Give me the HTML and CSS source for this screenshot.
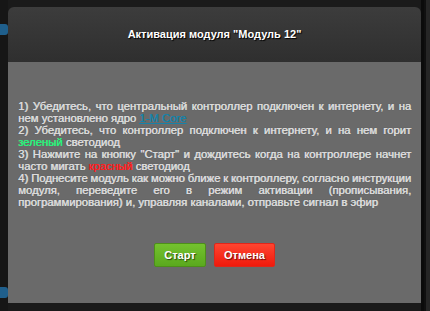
FILE: index.html
```html
<!DOCTYPE html>
<html>
  <head>
    <meta charset="utf-8" />
    <title>Активация модуля</title>
    <link rel="stylesheet" href="styles.css">
  </head>
  <body class="page">
    <div class="page-side">
      <span class="side-tab"></span>
      <span class="side-tab"></span>
    </div>

    <div class="modal">
      <div class="modal-header">
        <p class="modal-title">Активация модуля "Модуль 12"</p>
      </div>

      <div class="modal-body">
        <p class="modal-text">
          <span class="line line-full">1) Убедитесь, что центральный контроллер подключен к интернету, и на</span>
          <span class="line">нем установлено ядро <a class="core-link" href="#">1-M Core</a></span>
          <span class="line line-full">2) Убедитесь, что контроллер подключен к интернету, и на нем горит</span>
          <span class="line"><span class="led-green">зеленый</span> светодиод</span>
          <span class="line line-full">3) Нажмите на кнопку "Старт" и дождитесь когда на контроллере начнет</span>
          <span class="line">часто мигать <span class="led-red">красный</span> светодиод</span>
          <span class="line line-full line-tight">4) Поднесите модуль как можно ближе к контроллеру, согласно инструкции</span>
          <span class="line line-full">модуля, переведите его в режим активации (прописывания,</span>
          <span class="line">программирования) и, управляя каналами, отправьте сигнал в эфир</span>
        </p>

        <div class="modal-buttons">
          <button class="btn btn-start">Старт</button>
          <button class="btn btn-cancel">Отмена</button>
        </div>
      </div>
    </div>

    <div class="page-edge"></div>
  </body>
</html>
```

FILE: styles.css
```css
html {
  height: 100%;
}

.page {
  margin: 0;
  height: 100%;
  display: flex;
  background: #1a1a1a;
  font-family: "Liberation Sans", Arial, sans-serif;
}

.page-side {
  width: 8px;
  display: flex;
  flex-direction: column;
  padding-top: 24px;
  gap: 252px;
  background: #161616;
}

.side-tab {
  display: block;
  height: 11px;
  background: #1f5f8c;
  border-radius: 0 3px 3px 0;
}

.modal {
  width: 413px;
  margin: 7px 0 8px;
  display: flex;
  flex-direction: column;
  border-radius: 6px 6px 0 0;
  overflow: hidden;
}

.modal-header {
  height: 55px;
  display: flex;
  align-items: center;
  justify-content: center;
  background: linear-gradient(to bottom, #3c3c3c, #2f2f2f);
}

.modal-title {
  margin: 0 0 1px;
  color: #ffffff;
  font-size: 11px;
  font-weight: bold;
  text-shadow: 1px 1px 1px #000;
}

.modal-body {
  flex: 1;
  padding: 38px 10px 0;
  background: #6a6a6a;
}

.modal-text {
  margin: 0;
  color: #dcdcdc;
  font-size: 11.3px;
  line-height: 12px;
  text-shadow: 0.6px 0 0 #dcdcdc, 0 0 1px #4a4a4a;
}

.line {
  display: block;
  white-space: nowrap;
}

.line-full {
  text-align: justify;
  text-align-last: justify;
}

.line-tight {
  word-spacing: -1px;
}

.core-link {
  color: #1782a8;
  text-shadow: 0.4px 0 0 #1782a8;
}

.led-green {
  color: #2af27c;
  text-shadow: 0.4px 0 0 #2af27c;
}

.led-red {
  color: #ff1e1e;
  text-shadow: 0.4px 0 0 #ff1e1e;
}

.modal-buttons {
  display: flex;
  justify-content: center;
  gap: 8px;
  margin-top: 35px;
}

.btn {
  height: 24px;
  padding: 0;
  border-radius: 2px;
  color: #ffffff;
  font-family: "Liberation Sans", Arial, sans-serif;
  font-size: 11px;
  font-weight: bold;
  text-shadow: 1px 1px 1px rgba(0, 0, 0, 0.6);
  cursor: pointer;
}

.btn-start {
  width: 52px;
  border: 1px solid #4d8f1a;
  background: linear-gradient(to bottom, #74c22e, #5aa91e);
}

.btn-cancel {
  width: 61px;
  border: 1px solid #e0261a;
  background: linear-gradient(to bottom, #ff4530, #f01a0c);
}

.page-edge {
  flex: 1;
  background: #101010;
  border-left: 3px solid #0b0b0b;
  box-shadow: inset -4px 0 0 #262626;
}
```
